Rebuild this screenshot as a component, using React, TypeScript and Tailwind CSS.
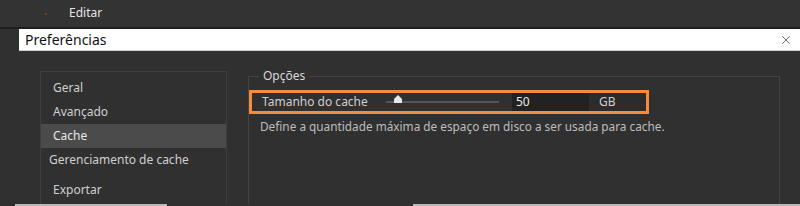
import { X } from 'lucide-react';

const items = [
  { label: 'Geral', pad: 'pl-3', h: 'h-6' },
  { label: 'Avançado', pad: 'pl-3', h: 'h-6' },
  { label: 'Cache', pad: 'pl-3', h: 'h-6', active: true },
  { label: 'Gerenciamento de cache', pad: 'pl-2', h: 'h-6' },
  { label: 'Exportar', pad: 'pl-3', h: 'h-[36px]' },
];

export default function App() {
  return (
    <div
      className="w-[800px] h-[206px] overflow-hidden bg-[#303030] text-[12px] text-[#cfcfcf] flex flex-col"
      style={{ fontFamily: '"Noto Sans", "Open Sans", sans-serif' }}
    >
      {/* menu bar */}
      <div className="h-[29px] shrink-0 bg-[#333333] border-b-2 border-[#1f1f1f] flex items-center">
        <span className="ml-[45px] w-[2px] h-[2px] bg-[#8a3a2a]" />
        <span className="ml-[22px] -mt-[2px] text-[#e6e6e6]">Editar</span>
      </div>

      {/* dialog title */}
      <div className="ml-[19px] h-[22px] shrink-0 bg-white border-b border-[#cfcfcf] flex items-center justify-between pl-[6px] pr-[7px]">
        <span className="text-[14px] text-[#111]">Preferências</span>
        <X size={14} strokeWidth={1.2} className="text-[#333]" />
      </div>

      {/* body */}
      <div className="flex-1 flex pl-[40px] pt-[20px] pr-[20px] gap-[21px] min-h-0">
        <div className="w-[187px] border border-[#3e3e3e] border-b-0 pt-[4px]">
          {items.map((it) => (
            <div
              key={it.label}
              className={`${it.h} flex items-center ${it.pad} ${
                it.active ? 'bg-[#4b4b4b] text-[#e8e8e8]' : ''
              }`}
            >
              {it.label}
            </div>
          ))}
        </div>

        <fieldset className="flex-1 border border-[#444444] border-b-0 -mt-[2px] px-0">
          <legend className="ml-[10px] px-[4px] text-[#d8d8d8] leading-[14px]">Opções</legend>

          <div className="mt-[7px] w-[400px] h-[24px] border-[3px] border-[#f68b3c] flex items-center">
            <span className="w-[131px] pl-[10px] text-[#cfcfcf]">Tamanho do cache</span>
            <div className="w-[116px] h-full flex items-center pl-[3px]">
              <div className="relative w-[113px] h-[2px] bg-[#555555]">
                <svg
                  width="8"
                  height="8"
                  viewBox="0 0 8 8"
                  className="absolute left-[8px] -top-[6px]"
                >
                  <path d="M4 0 L8 4 L8 8 L0 8 L0 4 Z" fill="#e8e8e8" />
                </svg>
              </div>
            </div>
            <div className="ml-[13px] w-[77px] h-full bg-[#222222] flex items-center pl-[4px] text-[#e8e8e8]">
              50
            </div>
            <div className="flex-1 h-full bg-[#2c2c2c] flex items-center pl-[10px] text-[#cfcfcf]">
              GB
            </div>
          </div>

          <div className="mt-[4px] pl-[11px] text-[11.8px] text-[#bdbdbd]">
            Define a quantidade máxima de espaço em disco a ser usada para cache.
          </div>
        </fieldset>
      </div>

      {/* bottom strip */}
      <div className="h-[2px] shrink-0 flex">
        <div className="w-[15px] bg-[#303030]" />
        <div className="w-[152px] bg-[#b8b8b8]" />
        <div className="w-[246px] bg-[#303030]" />
        <div className="flex-1 bg-[#b8b8b8]" />
      </div>
    </div>
  );
}
